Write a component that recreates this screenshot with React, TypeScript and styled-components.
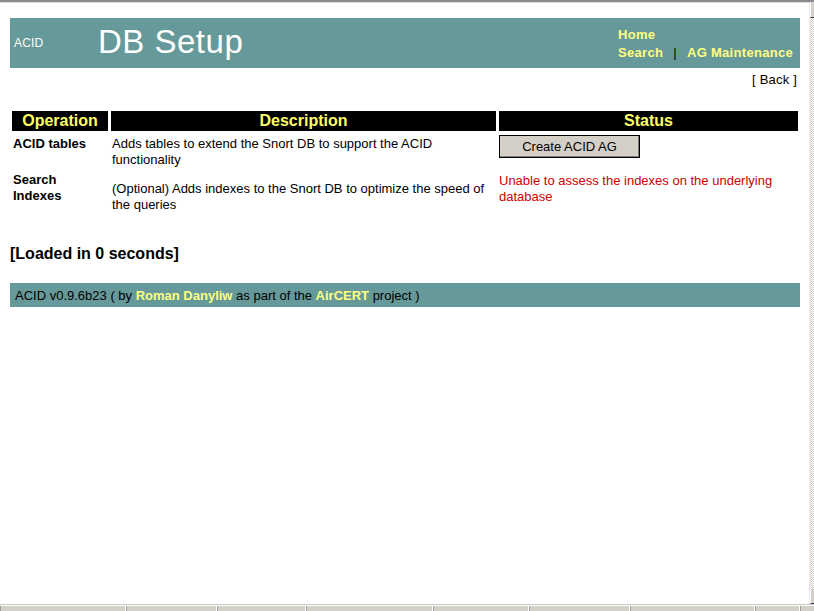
import React from "react";
import styled, { createGlobalStyle } from "styled-components";

const Global = createGlobalStyle`
  html, body { margin: 0; padding: 0; background: #ffffff; }
  body { font-family: "Liberation Sans", Arial, sans-serif; overflow: hidden; }
`;

const Frame = styled.div`
  width: 814px;
  height: 611px;
  display: flex;
  flex-direction: column;
  background: #ffffff;
`;

const TopEdge = styled.div`
  height: 2px;
  background: #8c8c8c;
  border-bottom: 1px solid #d8d8d8;
  flex: none;
`;

const Middle = styled.div`
  flex: 1;
  display: flex;
  min-height: 0;
`;

const Page = styled.main`
  flex: 1;
  padding: 15px 9px 0 10px;
  display: flex;
  flex-direction: column;
`;

const ScrollStrip = styled.div`
  width: 4px;
  flex: none;
  border-left: 1px solid #e8e8e8;
  background: repeating-conic-gradient(#d4d0c8 0% 25%, #ffffff 0% 50%) 0 0 / 2px 2px;
  display: flex;
  flex-direction: column;
  justify-content: space-between;
`;

const ScrollButton = styled.div`
  height: 14px;
  background: #d4d0c8;
  border-left: 1px solid #ffffff;
  border-bottom: 1px solid #404040;
`;

const StatusBar = styled.div`
  height: 5px;
  flex: none;
  border-top: 1px solid #c8c8c8;
  padding-top: 1px;
  display: flex;
  gap: 1px;
  background: #ffffff;
`;

const StatusPanel = styled.div<{ $w: number }>`
  width: ${(p) => p.$w}px;
  flex: none;
  background: #d4d0c8;
  border-left: 1px solid #a0a0a0;
  &:last-child { flex: 1; }
`;

const Header = styled.header`
  height: 50px;
  background: #669999;
  display: flex;
  align-items: center;
  padding: 0 7px 0 4px;
`;

const Brand = styled.div`
  width: 84px;
  color: #ffffff;
  font-size: 12px;
  letter-spacing: 0.2px;
`;

const Title = styled.h1`
  margin: 0;
  flex: 1;
  color: #ffffff;
  font-weight: normal;
  font-size: 33px;
  letter-spacing: 0.5px;
  padding-bottom: 2px;
`;

const Nav = styled.nav`
  display: flex;
  flex-direction: column;
  font-size: 13px;
  font-weight: bold;
  line-height: 18px;
  letter-spacing: 0.3px;
  padding-top: 2px;
`;

const NavLink = styled.a`
  color: #ffff80;
  text-decoration: none;
`;

const NavSep = styled.span`
  color: #000000;
  font-weight: normal;
  margin: 0 10px;
`;

const BackRow = styled.div`
  text-align: right;
  font-size: 13px;
  letter-spacing: 0.2px;
  padding: 4px 3px 0 0;
  height: 20px;
  color: #000000;
`;

const Table = styled.div`
  margin-top: 19px;
  display: grid;
  grid-template-columns: 96px 385px 1fr;
  column-gap: 3px;
  padding: 0 2px;
`;

const HeadCell = styled.div`
  background: #000000;
  color: #ffff66;
  font-weight: bold;
  font-size: 16px;
  height: 20px;
  line-height: 20px;
  text-align: center;
`;

const OpCell = styled.div<{ $top: number }>`
  font-size: 13px;
  font-weight: bold;
  line-height: 16px;
  padding: ${(p) => p.$top}px 0 0 1px;
  color: #000000;
`;

const DescCell = styled.div<{ $top: number }>`
  font-size: 13px;
  line-height: 16px;
  padding: ${(p) => p.$top}px 0 0 1px;
  color: #000000;
`;

const StatusCell = styled.div<{ $top: number }>`
  padding: ${(p) => p.$top}px 0 0 0;
  font-size: 13px;
  line-height: 16px;
`;

const ErrorText = styled.span`
  color: #cc0000;
`;

const CreateButton = styled.button`
  width: 141px;
  height: 23px;
  background: #d4d0c8;
  border: 1px solid;
  border-color: #ffffff #404040 #404040 #ffffff;
  box-shadow: inset -1px -1px 0 #808080;
  outline: 1px solid #000000;
  outline-offset: -1px;
  font-family: "Liberation Sans", Arial, sans-serif;
  font-size: 13px;
  color: #000000;
  padding: 0;
  margin-top: 3px;
`;

const Loaded = styled.div`
  margin-top: 32px;
  font-size: 16px;
  font-weight: bold;
  color: #000000;
`;

const Footer = styled.footer`
  margin-top: 20px;
  height: 24px;
  background: #669999;
  display: flex;
  align-items: center;
  padding-left: 5px;
  font-size: 13px;
  color: #000000;
`;

const FooterLink = styled.a`
  color: #ffff80;
  font-weight: bold;
  text-decoration: none;
`;

const panels = [124, 89, 87, 125, 94, 99, 123, 43, 20];

export default function App() {
  return (
    <Frame>
      <Global />
      <TopEdge />
      <Middle>
        <Page>
          <Header>
            <Brand>ACID</Brand>
            <Title>DB Setup</Title>
            <Nav>
              <div>
                <NavLink href="#">Home</NavLink>
              </div>
              <div>
                <NavLink href="#">Search</NavLink>
                <NavSep>|</NavSep>
                <NavLink href="#">AG Maintenance</NavLink>
              </div>
            </Nav>
          </Header>
          <BackRow>[ Back ]</BackRow>
          <Table>
            <HeadCell>Operation</HeadCell>
            <HeadCell>Description</HeadCell>
            <HeadCell>Status</HeadCell>

            <OpCell $top={5}>ACID tables</OpCell>
            <DescCell $top={5}>
              Adds tables to extend the Snort DB to support the ACID functionality
            </DescCell>
            <StatusCell $top={1}>
              <CreateButton>Create ACID AG</CreateButton>
            </StatusCell>

            <OpCell $top={4}>
              Search
              <br />
              Indexes
            </OpCell>
            <DescCell $top={13}>
              (Optional) Adds indexes to the Snort DB to optimize the speed of the queries
            </DescCell>
            <StatusCell $top={5}>
              <ErrorText>Unable to assess the indexes on the underlying database</ErrorText>
            </StatusCell>
          </Table>
          <Loaded>[Loaded in 0 seconds]</Loaded>
          <Footer>
            ACID v0.9.6b23 ( by&nbsp;<FooterLink href="#">Roman Danyliw</FooterLink>&nbsp;as part of the&nbsp;
            <FooterLink href="#">AirCERT</FooterLink>&nbsp;project )
          </Footer>
        </Page>
        <ScrollStrip>
          <ScrollButton />
          <ScrollButton />
        </ScrollStrip>
      </Middle>
      <StatusBar>
        {panels.map((w, i) => (
          <StatusPanel key={i} $w={w} />
        ))}
      </StatusBar>
    </Frame>
  );
}
